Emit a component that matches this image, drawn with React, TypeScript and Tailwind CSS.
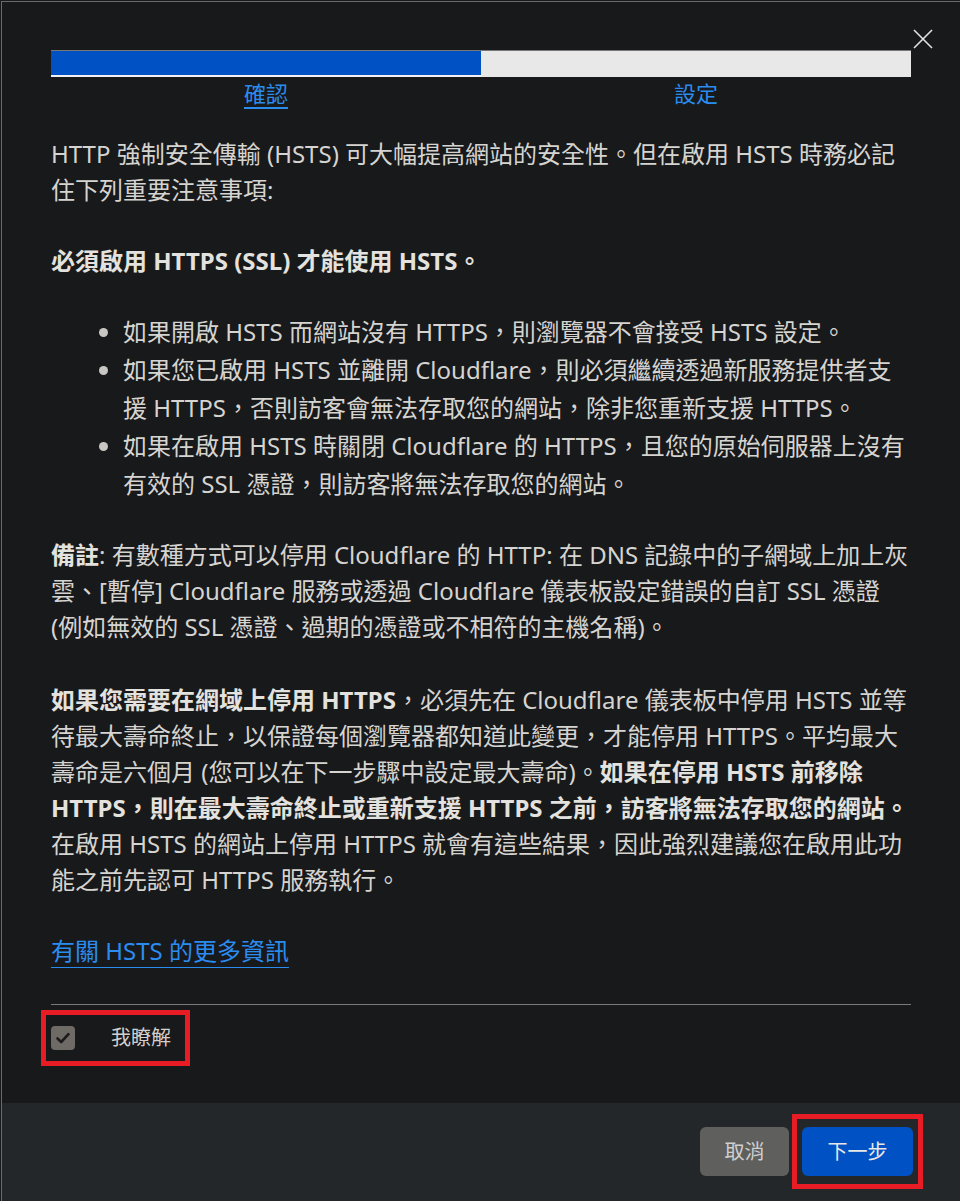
import { useState } from "react";

const bodyFont = {
  fontFamily: '"Noto Sans", "Noto Sans CJK TC", sans-serif',
};

function CloseIcon() {
  return (
    <svg width="20" height="20" viewBox="0 0 20 20" fill="none">
      <path d="M1 1L19 19M19 1L1 19" stroke="#e2e2e2" strokeWidth="1.6" />
    </svg>
  );
}

function CheckMark() {
  return (
    <svg width="16" height="16" viewBox="0 0 16 16" fill="none">
      <path
        d="M2.5 8.5L6.2 12L13.5 4.2"
        stroke="#1c1c1c"
        strokeWidth="2.6"
        strokeLinecap="round"
        strokeLinejoin="round"
      />
    </svg>
  );
}

export default function App() {
  const [agreed, setAgreed] = useState(true);

  return (
    <div className="min-h-[1201px] w-[960px] bg-[#18191b] pl-[1px] pt-[1px]" style={bodyFont}>
      <div className="relative flex min-h-[1200px] flex-col border-l border-t border-[#6a6a6a] bg-[#18191b]">
        <button className="absolute right-[27px] top-[27px]">
          <CloseIcon />
        </button>

        <div className="px-[49px] pt-[48px]">
          {/* step progress */}
          <div className="flex h-[27px] border-t border-[#777]">
            <div className="w-1/2 border-b-2 border-[#f2f2f2] bg-[#0051c3]" />
            <div className="w-1/2 bg-[#e8e8e8]" />
          </div>
          <div className="grid grid-cols-2 text-center text-[22px] text-[#2b8cf0]">
            <div>
              <span className="inline-block border-b-2 border-[#2b8cf0] leading-[28px]">確認</span>
            </div>
            <div>
              <span className="inline-block leading-[28px]">設定</span>
            </div>
          </div>

          {/* body */}
          <div className="mt-[26px] text-[24px] leading-[36px] text-[#d6d4d0]">
            <p>
              HTTP 強制安全傳輸 (HSTS) 可大幅提高網站的安全性。但在啟用 HSTS 時務必記住下列重要注意事項:
            </p>
            <p className="mt-[35px] font-bold text-[#e4e2de]">必須啟用 HTTPS (SSL) 才能使用 HSTS。</p>
            <ul className="mt-[34px] list-disc pl-[72px] leading-[38px] marker:text-[#c9c7c3]">
              <li>如果開啟 HSTS 而網站沒有 HTTPS，則瀏覽器不會接受 HSTS 設定。</li>
              <li>
                如果您已啟用 HSTS 並離開 Cloudflare，則必須繼續透過新服務提供者支援 HTTPS，否則訪客會無法存取您的網站，除非您重新支援 HTTPS。
              </li>
              <li>
                如果在啟用 HSTS 時關閉 Cloudflare 的 HTTPS，且您的原始伺服器上沒有有效的 SSL 憑證，則訪客將無法存取您的網站。
              </li>
            </ul>
            <p className="mt-[34px]">
              <b className="text-[#e4e2de]">備註</b>: 有數種方式可以停用 Cloudflare 的 HTTP: 在 DNS 記錄中的子網域上加上灰雲、[暫停] Cloudflare 服務或透過 Cloudflare 儀表板設定錯誤的自訂 SSL 憑證 (例如無效的 SSL 憑證、過期的憑證或不相符的主機名稱)。
            </p>
            <p className="mt-[37px]">
              <b className="text-[#e4e2de]">如果您需要在網域上停用 HTTPS</b>，必須先在 Cloudflare 儀表板中停用 HSTS 並等待最大壽命終止，以保證每個瀏覽器都知道此變更，才能停用 HTTPS。平均最大壽命是六個月 (您可以在下一步驟中設定最大壽命)。
              <b className="text-[#e4e2de]">如果在停用 HSTS 前移除 HTTPS，則在最大壽命終止或重新支援 HTTPS 之前，訪客將無法存取您的網站。</b>
              在啟用 HSTS 的網站上停用 HTTPS 就會有這些結果，因此強烈建議您在啟用此功能之前先認可 HTTPS 服務執行。
            </p>
            <p className="mt-[35px]">
              <a href="#" className="text-[#2b8cf0] underline decoration-1 underline-offset-[7px]">
                有關 HSTS 的更多資訊
              </a>
            </p>
          </div>

          <div className="mt-[35px] border-t border-[#7a7a7a]" />

          <label className="-ml-[10px] mt-[5px] flex h-[56px] w-[149px] cursor-pointer items-center border-[5px] border-[#e81c24] pl-[5px]">
            <span
              onClick={() => setAgreed(!agreed)}
              className="flex h-[24px] w-[24px] items-center justify-center rounded-[4px] bg-[#6e6a66]"
            >
              {agreed && <CheckMark />}
            </span>
            <span className="ml-[36px] text-[20px] text-[#d2d0cc]">我瞭解</span>
          </label>
        </div>

        {/* footer */}
        <div className="mt-[37px] flex flex-1 items-start justify-end bg-[#24272a] py-[11px] pr-[37px]">
          <button className="mt-[13px] h-[49px] w-[89px] rounded-[6px] bg-[#5f605e] text-[20px] text-[#cfcfcf]">
            取消
          </button>
          <div className="ml-[3px] border-[5px] border-[#e81c24] px-[5px] py-[8px]">
            <button className="h-[49px] w-[111px] rounded-[6px] bg-[#0051c3] text-[20px] text-[#e8e8e8]">
              下一步
            </button>
          </div>
        </div>
      </div>
    </div>
  );
}
